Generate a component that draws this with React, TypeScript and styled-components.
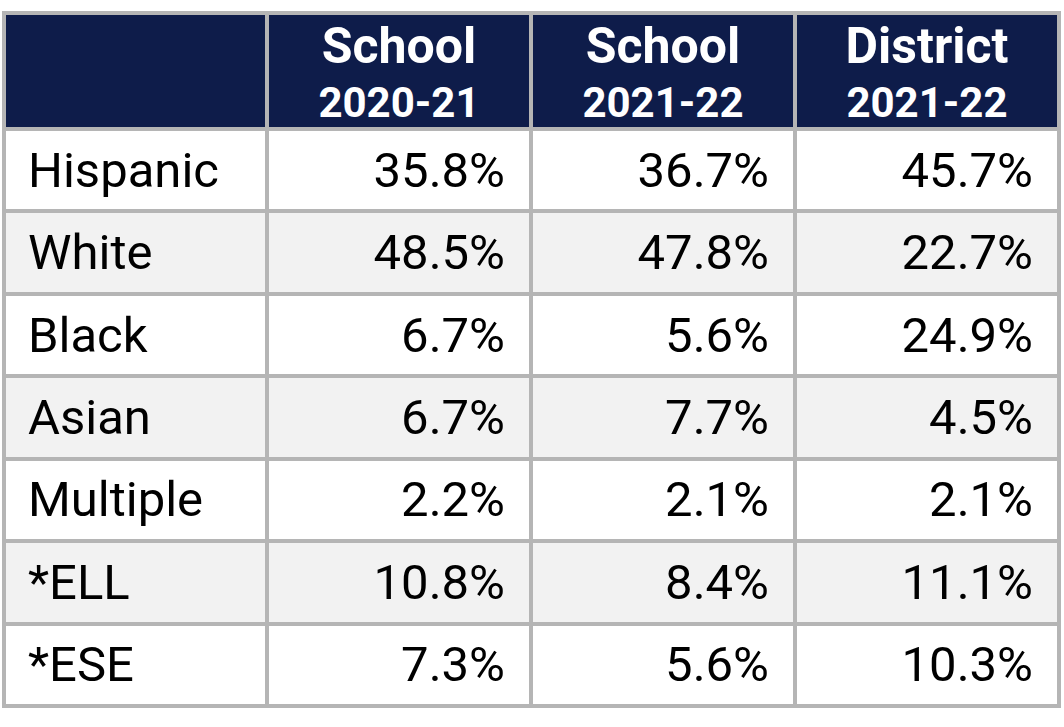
import { FC } from 'react';
import styled, { createGlobalStyle } from 'styled-components';

const colors = {
  navy: '#0e1c4a',
  line: '#b5b5b5',
  stripe: '#f2f2f2',
  white: '#ffffff',
  text: '#000000',
};

type Row = {
  label: string;
  values: [string, string, string];
};

const columns = [
  { title: 'School', year: '2020-21' },
  { title: 'School', year: '2021-22' },
  { title: 'District', year: '2021-22' },
];

const rows: Row[] = [
  { label: 'Hispanic', values: ['35.8%', '36.7%', '45.7%'] },
  { label: 'White', values: ['48.5%', '47.8%', '22.7%'] },
  { label: 'Black', values: ['6.7%', '5.6%', '24.9%'] },
  { label: 'Asian', values: ['6.7%', '7.7%', '4.5%'] },
  { label: 'Multiple', values: ['2.2%', '2.1%', '2.1%'] },
  { label: '*ELL', values: ['10.8%', '8.4%', '11.1%'] },
  { label: '*ESE', values: ['7.3%', '5.6%', '10.3%'] },
];

export default function App() {
  return (
    <>
      <GlobalStyle />
      <Page>
        <DemographicsTable columns={ columns } rows={ rows } />
      </Page>
    </>
  );
}

type TableProps = {
  columns: { title: string; year: string }[];
  rows: Row[];
};

const DemographicsTable: FC<TableProps> = ( { columns, rows } ) => (
  <Grid>
    <HeaderCell />
    { columns.map( ( col, i ) => (
      <HeaderCell key={ i }>
        <HeaderTitle>{ col.title }</HeaderTitle>
        <HeaderYear>{ col.year }</HeaderYear>
      </HeaderCell>
    ) ) }
    { rows.map( ( row, r ) => (
      <RowGroup key={ row.label } $striped={ r % 2 === 1 }>
        <LabelCell>{ row.label }</LabelCell>
        { row.values.map( ( v, i ) => (
          <ValueCell key={ i }>{ v }</ValueCell>
        ) ) }
      </RowGroup>
    ) ) }
  </Grid>
);

const GlobalStyle = createGlobalStyle`
  html, body {
    margin: 0;
    padding: 0;
    background: ${ colors.white };
  }
  body {
    font-family: Roboto, 'Liberation Sans', Arial, sans-serif;
  }
`;

const Page = styled.div`
  width: 1064px;
  height: 727px;
  padding: 11px 0 0 2px;
  box-sizing: border-box;
`;

const Grid = styled.div`
  display: grid;
  grid-template-columns: 259px repeat(3, 260px);
  grid-template-rows: 112px repeat(7, 78.43px);
  gap: 4px;
  padding: 4px;
  width: 1059px;
  box-sizing: border-box;
  background-color: ${ colors.line };
`;

const HeaderCell = styled.div`
  display: flex;
  flex-direction: column;
  align-items: center;
  justify-content: center;
  background-color: ${ colors.navy };
  color: ${ colors.white };
  font-weight: 700;
`;

const HeaderTitle = styled.div`
  font-size: 50px;
  line-height: 64px;
`;

const HeaderYear = styled.div`
  font-size: 42px;
  line-height: 50px;
`;

const RowGroup = styled.div<{ $striped: boolean }>`
  display: contents;

  & > div {
    background-color: ${ ( p ) => ( p.$striped ? colors.stripe : colors.white ) };
  }
`;

const BodyCell = styled.div`
  display: flex;
  align-items: center;
  font-size: 49px;
  color: ${ colors.text };
  white-space: nowrap;
`;

const LabelCell = styled( BodyCell )`
  padding-left: 22px;
`;

const ValueCell = styled( BodyCell )`
  justify-content: flex-end;
  padding-right: 24px;
`;
